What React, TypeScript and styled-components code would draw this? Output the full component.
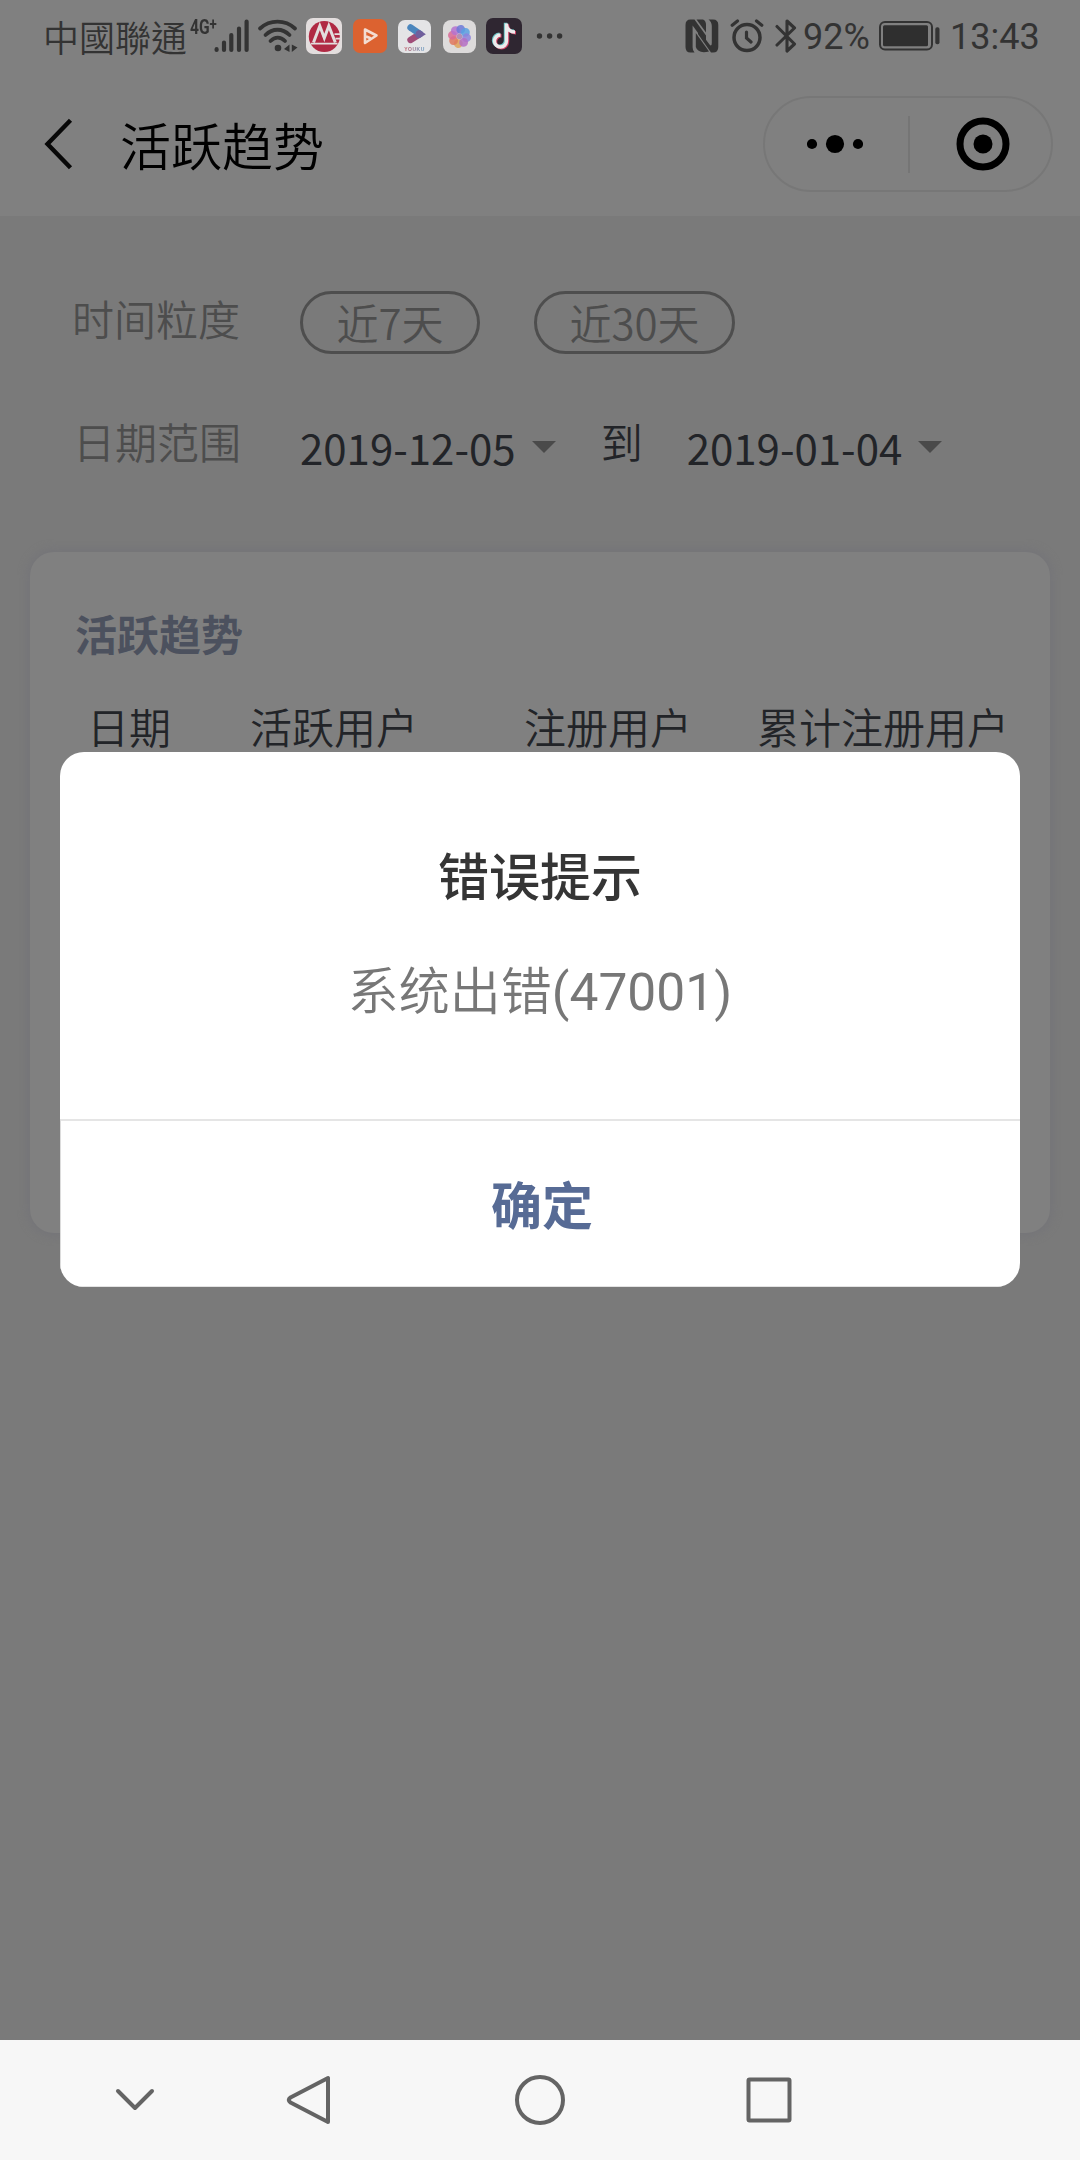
import React from "react";
import styled, { createGlobalStyle } from "styled-components";

const cjk = `"Noto Sans CJK SC", "Noto Sans CJK TC", sans-serif`;

const GlobalStyle = createGlobalStyle`
  *, *::before, *::after { box-sizing: border-box; }
  html, body { margin: 0; padding: 0; background: #7a7a7a; }
  body { font-family: ${cjk}; }
  svg { display: block; flex: none; }
`;

const Screen = styled.div`
  position: relative;
  display: flex;
  flex-direction: column;
  width: 1080px;
  height: 2160px;
  background: #7a7a7a;
  overflow: hidden;
`;

const StatusBar = styled.header`
  display: flex;
  justify-content: space-between;
  height: 72px;
  padding: 0 42px 0 43px;
  background: #808080;
  color: #333;
`;

const StatusGroup = styled.div`
  display: flex;
  align-items: center;
  height: 72px;
`;

const Carrier = styled.span`
  width: 147px;
  font: 350 36px/72px "Noto Sans CJK TC", "Noto Sans CJK SC", sans-serif;
  white-space: nowrap;
`;

const NetworkType = styled.span`
  align-self: flex-start;
  width: 24px;
  margin-top: 17px;
  font: 700 20px/20px Roboto, sans-serif;
  white-space: nowrap;
  transform: scaleX(0.78);
  transform-origin: left;
  sup {
    font-size: 17px;
    line-height: 0;
    vertical-align: 4px;
  }
`;

const StatusText = styled.span<{ $width: number }>`
  display: block;
  width: ${(p) => p.$width}px;
  margin-top: 2px;
  font: 400 36px/72px Roboto, sans-serif;
  white-space: nowrap;
`;

const Slot = styled.span<{ $gap?: number }>`
  display: block;
  margin-left: ${(p) => p.$gap ?? 0}px;
`;

const TitleBar = styled.div`
  display: flex;
  align-items: center;
  height: 144px;
  padding: 0 27px 0 44px;
  background: #808080;
`;

const PageTitle = styled.h1`
  flex: 1;
  margin: 0 0 0 46px;
  font: 350 51px/72px ${cjk};
  color: #000;
`;

const Capsule = styled.div`
  display: grid;
  grid-template-columns: 143px 2px 1fr;
  align-items: center;
  width: 290px;
  height: 96px;
  border: 2px solid #777;
  border-radius: 48px;
`;

const BareButton = styled.button`
  display: flex;
  align-items: center;
  justify-content: center;
  margin: 0;
  padding: 0;
  border: 0;
  background: none;
`;

const CapsuleButton = styled(BareButton)<{ $shift: number }>`
  height: 92px;
  padding-left: ${(p) => Math.max(p.$shift, 0)}px;
  padding-right: ${(p) => Math.max(-p.$shift, 0)}px;
`;

const CapsuleDivider = styled.span`
  width: 2px;
  height: 57px;
  background: #757575;
`;

const Filters = styled.section`
  display: flex;
  flex-direction: column;
  height: 336px;
  padding: 75px 72px 0;
`;

const FilterRow = styled.div<{ $height: number }>`
  display: flex;
  align-items: flex-start;
  height: ${(p) => p.$height}px;
`;

const FilterLabel = styled.span<{ $indent?: number }>`
  width: 228px;
  padding-left: ${(p) => p.$indent ?? 0}px;
  font-weight: 350;
  font-size: 42px;
  line-height: 54px;
  color: #4d4d4d;
`;

const Pill = styled(BareButton)<{ $width: number }>`
  width: ${(p) => p.$width}px;
  height: 63px;
  padding-bottom: 2px;
  margin-right: 54px;
  border: 3px solid #4e4e4e;
  border-radius: 32px;
  font: 350 42px/55px ${cjk};
  color: #4d4d4d;
`;

const DateValue = styled.span`
  display: flex;
  align-items: center;
  gap: 16px;
  margin-top: 6px;
  font-weight: 400;
  font-size: 42px;
  line-height: 54px;
  color: #222428;
`;

const Caret = styled.i`
  border: 12px solid transparent;
  border-top-color: #4a4a4a;
  border-bottom: 0;
`;

const Until = styled.span`
  width: 86px;
  margin-left: 45px;
  font-weight: 350;
  font-size: 42px;
  line-height: 54px;
  color: #222428;
`;

const Card = styled.section`
  height: 681px;
  margin: 0 30px;
  padding: 51px 0 0 45px;
  background: #808080;
  border-radius: 24px;
  box-shadow: 0 0 9px 3px #757579;
`;

const CardTitle = styled.h2`
  margin: 0;
  font: 700 42px/60px ${cjk};
  color: #4c515e;
`;

const TableHead = styled.div`
  display: grid;
  grid-template-columns: 163px 274px 233px 1fr;
  margin-top: 33px;
  padding-left: 12px;
  font-weight: 350;
  font-size: 42px;
  line-height: 60px;
  color: #222428;
  white-space: nowrap;
`;

const Dialog = styled.div`
  position: absolute;
  top: 752px;
  left: 60px;
  width: 960px;
  height: 535px;
  display: flex;
  flex-direction: column;
  background: #fff;
  border-radius: 24px;
  overflow: hidden;
`;

const DialogBody = styled.div`
  height: 367px;
  padding-top: 86px;
  text-align: center;
`;

const DialogTitle = styled.h3`
  margin: 0;
  font: 500 51px/72px ${cjk};
  color: #353535;
`;

const DialogMessage = styled.p`
  margin: 42px 0 0;
  font: 350 51px/72px ${cjk};
  color: #777;
`;

const Code = styled.span`
  font: 400 51.5px/1 Roboto, sans-serif;
`;

const ConfirmButton = styled(BareButton)`
  flex: 1;
  padding: 0 0 2px 3px;
  border-top: 2px solid #e5e5e5;
  border-left: 1px solid #dcdcdc;
  border-bottom: 1px solid #e3e3e3;
  font: 700 51px/72px ${cjk};
  color: #576b95;
`;

const NavBar = styled.nav`
  display: flex;
  align-items: center;
  height: 120px;
  margin-top: auto;
  padding-left: 105px;
  background: #f7f7f7;
`;

const NavButton = styled(BareButton)<{ $gap?: number }>`
  width: 60px;
  height: 60px;
  margin-left: ${(p) => p.$gap ?? 0}px;
`;

const SignalIcon = () => (
  <svg width="36" height="36" viewBox="0 0 36 36" stroke="#333" strokeWidth="4.2" strokeLinecap="round">
    <path d="M2.6 31.2V32M10 24.5V32M17.3 17V32M25 10.5V32M32.6 3.5V32" />
  </svg>
);

const WifiIcon = () => (
  <svg width="42" height="36" viewBox="0 0 42 36" fill="none" stroke="#333" strokeWidth="3.8" strokeLinecap="round">
    <path d="M3 10.5C13 1.3 28 1.3 38 10.5M8.5 17C15.5 10 25.5 10 32.5 17M13.5 23C18 18.5 23.5 18.5 28 23" />
    <circle cx="21" cy="30" r="3.3" fill="#333" stroke="none" />
    <path d="M32.5 26.5V34L27 31ZM34.8 26.5L40.5 29.5L34.8 34Z" fill="#333" stroke="none" />
  </svg>
);

const BankIcon = () => (
  <svg width="36" height="36" viewBox="0 0 36 36">
    <rect width="36" height="36" rx="7" fill="#e3dede" />
    <circle cx="18.3" cy="18.5" r="15.5" fill="#b02a44" />
    <path d="M7.5 24.5L13.8 8L18.3 20L22.8 8L29.3 24.5" fill="none" stroke="#e3dede" strokeWidth="3" />
    <path d="M14 14.5L9.8 24.5H18ZM22.8 14.5L18.8 24.5H26.8Z" fill="#b02a44" />
    <path d="M5 25.6H31.5M28.5 16.2H35M29.5 20.6H35" stroke="#e3dede" strokeWidth="1.8" />
  </svg>
);

const PlayerIcon = () => (
  <svg width="34" height="34" viewBox="0 0 34 34">
    <rect width="34" height="34" rx="7" fill="#dc6230" />
    <path d="M12 17V10.5L23.5 16.5L12 24V17L17 19" fill="none" stroke="#f3ddd2" strokeWidth="2.6" strokeLinejoin="round" strokeLinecap="round" />
  </svg>
);

const YoukuBadge = styled.span`
  display: flex;
  flex-direction: column;
  align-items: center;
  width: 33px;
  height: 33px;
  border-radius: 7px;
  background: #e4e4e6;
`;

const YoukuName = styled.span`
  font: 700 5px/6px "Liberation Sans", sans-serif;
  letter-spacing: 0.5px;
  background: linear-gradient(90deg, #c3545e, #5f9bc4);
  background-clip: text;
  color: transparent;
`;

const YoukuIcon = () => (
  <YoukuBadge>
    <svg width="33" height="26" viewBox="0 0 33 26" fill="none" strokeLinecap="round" strokeWidth="6.4">
      <path d="M12.5 20L22 14" stroke="#a04d78" />
      <path d="M12.5 7.5L22 14" stroke="#4b86bd" />
      <path d="M21 13.3L22 14L20.5 14.9" stroke="#705f9c" />
    </svg>
    <YoukuName>YOUKU</YoukuName>
  </YoukuBadge>
);

const petals = ["#dfa35c", "#e0785f", "#d96a96", "#b572cf", "#6d79d8", "#5aa0e0", "#8d84dc", "#b56ec4"];

const GalleryIcon = () => (
  <svg width="33" height="33" viewBox="0 0 33 33">
    <rect width="33" height="33" rx="8" fill="#dddbdb" />
    {petals.map((fill, i) => (
      <circle key={fill} cx="16.5" cy="9.3" r="4.4" fill={fill} opacity="0.85" transform={`rotate(${i * 45 + 190} 16.5 16.5)`} />
    ))}
    <circle cx="16.5" cy="16.5" r="2.8" fill="#b48fb5" />
  </svg>
);

const note = "M20.5 5.5V23A6 6 0 1 1 14.5 17M20.5 7C21 11.5 24.5 14 29 14";

const TiktokIcon = () => (
  <svg width="36" height="36" viewBox="0 0 36 36" fill="none" strokeWidth="3.4">
    <rect width="36" height="36" rx="7" fill="#2f2631" />
    <path d={note} stroke="#6cc4c6" transform="translate(-1 -0.8)" />
    <path d={note} stroke="#cf4264" transform="translate(1 0.8)" />
    <path d={note} stroke="#ecebec" />
  </svg>
);

const MoreDots = () => (
  <svg width="28" height="8" viewBox="0 0 28 8" fill="#333">
    <circle cx="3.5" cy="4" r="2.7" />
    <circle cx="13.6" cy="4" r="2.7" />
    <circle cx="23.6" cy="4" r="2.7" />
  </svg>
);

const NfcIcon = () => (
  <svg width="34" height="34" viewBox="0 0 34 34" fill="#333">
    <path d="M5.5 0.5H9.5L21 16.5V25L7.6 6.5V28Q7.6 32 9.5 33.5H5.5Q0.5 33.5 0.5 28V6Q0.5 0.5 5.5 0.5Z" />
    <path d="M11.5 0.5H18Q21 1.5 21 6V13.5Z" />
    <path d="M10.8 14L24 32.5Q13 35 10.8 28Z" />
    <path d="M23.5 0.5H28Q33.3 0.5 33.3 6V28Q33.3 33.5 28 33.5H26L13 15V10L24.5 25.5Q26.8 28 26.8 24V7Q26.6 2.5 23.5 0.5Z" />
  </svg>
);

const AlarmIcon = () => (
  <svg width="34" height="34" viewBox="0 0 34 34" fill="none" stroke="#333" strokeWidth="3.5" strokeLinecap="round">
    <circle cx="17" cy="18.5" r="13" />
    <path d="M2.2 6.3L7.5 2M31.8 6.3L26.5 2M16.5 13V19L21 23" strokeWidth="3.2" />
  </svg>
);

const BluetoothIcon = () => (
  <svg width="22" height="36" viewBox="0 0 22 36" fill="none" stroke="#333" strokeWidth="3.1" strokeLinecap="round" strokeLinejoin="round">
    <path d="M2 8.5L19.5 26L12 33V3L19.5 10L2 27" />
  </svg>
);

const BatteryIcon = () => (
  <svg width="61" height="30" viewBox="0 0 61 30">
    <rect x="1" y="1" width="52" height="27.5" rx="5" fill="none" stroke="#333" strokeWidth="2" />
    <rect x="4" y="4.3" width="45" height="21" rx="1.5" fill="#2f2f2f" />
    <rect x="56.3" y="6.3" width="4.2" height="17" rx="1.8" fill="#333" />
  </svg>
);

const BackIcon = () => (
  <svg width="30" height="52" viewBox="0 0 30 52" fill="none" stroke="#080808" strokeWidth="4.4">
    <path d="M26.5 2.2L3.5 26L26.5 49.8" />
  </svg>
);

const MenuIcon = () => (
  <svg width="56" height="20" viewBox="0 0 56 20">
    <circle cx="5" cy="10" r="5.1" />
    <circle cx="28" cy="10" r="9.1" />
    <circle cx="51" cy="10" r="5.1" />
  </svg>
);

const TargetIcon = () => (
  <svg width="54" height="54" viewBox="0 0 54 54">
    <circle cx="27" cy="27" r="23" fill="none" stroke="#000" strokeWidth="7" />
    <circle cx="27" cy="27" r="9.5" />
  </svg>
);

const NavIcon = ({ d, children }: { d?: string; children?: React.ReactNode }) => (
  <svg width="60" height="60" viewBox="0 0 60 60" fill="none" stroke="#646464" strokeWidth="4" strokeLinecap="round" strokeLinejoin="round">
    {d && <path d={d} />}
    {children}
  </svg>
);

export default function App() {
  return (
    <Screen>
      <GlobalStyle />
      <StatusBar>
        <StatusGroup>
          <Carrier>中國聯通</Carrier>
          <NetworkType>4G<sup>+</sup></NetworkType>
          <Slot><SignalIcon /></Slot>
          <Slot $gap={7}><WifiIcon /></Slot>
          <Slot $gap={7}><BankIcon /></Slot>
          <Slot $gap={11}><PlayerIcon /></Slot>
          <Slot $gap={11}><YoukuIcon /></Slot>
          <Slot $gap={12}><GalleryIcon /></Slot>
          <Slot $gap={10}><TiktokIcon /></Slot>
          <Slot $gap={14}><MoreDots /></Slot>
        </StatusGroup>
        <StatusGroup>
          <Slot><NfcIcon /></Slot>
          <Slot $gap={11}><AlarmIcon /></Slot>
          <Slot $gap={11}><BluetoothIcon /></Slot>
          <Slot $gap={6}><StatusText $width={76}>92%</StatusText></Slot>
          <Slot><BatteryIcon /></Slot>
          <Slot $gap={10}><StatusText $width={88}>13:43</StatusText></Slot>
        </StatusGroup>
      </StatusBar>

      <TitleBar>
        <BackIcon />
        <PageTitle>活跃趋势</PageTitle>
        <Capsule>
          <CapsuleButton $shift={-3}><MenuIcon /></CapsuleButton>
          <CapsuleDivider />
          <CapsuleButton $shift={5}><TargetIcon /></CapsuleButton>
        </Capsule>
      </TitleBar>

      <Filters>
        <FilterRow $height={123}>
          <FilterLabel>时间粒度</FilterLabel>
          <Pill $width={180}>近7天</Pill>
          <Pill $width={201}>近30天</Pill>
        </FilterRow>
        <FilterRow $height={70}>
          <FilterLabel $indent={1}>日期范围</FilterLabel>
          <DateValue>2019-12-05<Caret /></DateValue>
          <Until>到</Until>
          <DateValue>2019-01-04<Caret /></DateValue>
        </FilterRow>
      </Filters>

      <Card>
        <CardTitle>活跃趋势</CardTitle>
        <TableHead>
          <span>日期</span>
          <span>活跃用户</span>
          <span>注册用户</span>
          <span>累计注册用户</span>
        </TableHead>
      </Card>

      <NavBar>
        <NavButton><NavIcon d="M13 21L30 38L47 21" /></NavButton>
        <NavButton $gap={114}><NavIcon d="M49 8V52L11.5 32.5Q8 30 11.5 27.5Z" /></NavButton>
        <NavButton $gap={171}><NavIcon><circle cx="30" cy="30" r="23" /></NavIcon></NavButton>
        <NavButton $gap={169}><NavIcon><rect x="9.5" y="9.5" width="41" height="41" rx="1" /></NavIcon></NavButton>
      </NavBar>

      <Dialog role="alertdialog">
        <DialogBody>
          <DialogTitle>错误提示</DialogTitle>
          <DialogMessage>系统出错<Code>(47001)</Code></DialogMessage>
        </DialogBody>
        <ConfirmButton>确定</ConfirmButton>
      </Dialog>
    </Screen>
  );
}
